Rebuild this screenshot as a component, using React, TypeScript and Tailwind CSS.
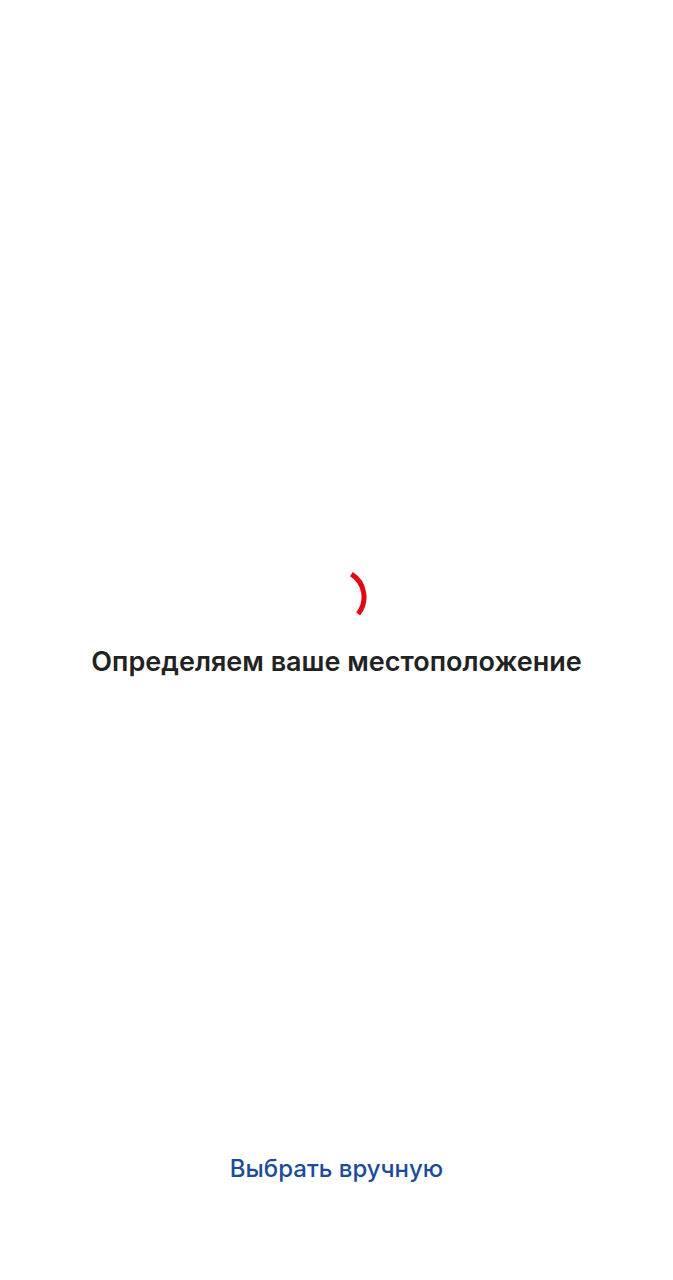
import React from 'react'

function Spinner() {
  return (
    <svg width="60" height="60" viewBox="0 0 60 60" className="block">
      <path
        d="M44.4 7.2 A27 27 0 0 1 51.1 46.9"
        fill="none"
        stroke="#e30613"
        strokeWidth="5"
        strokeLinecap="butt"
      />
    </svg>
  )
}

export default function App() {
  return (
    <div
      className="h-[1280px] w-full bg-white flex flex-col items-center"
      style={{ fontFamily: 'Inter, "Noto Sans", sans-serif' }}
    >
      <div className="flex-1 flex flex-col items-center pt-[567px]">
        <Spinner />
        <h1 className="mt-[18px] text-[27px] leading-[34px] font-semibold text-[#222222]">
          Определяем ваше местоположение
        </h1>
      </div>
      <button className="mb-[96px] text-[24px] leading-[30px] font-medium text-[#1c4b9c]">
        Выбрать вручную
      </button>
    </div>
  )
}
